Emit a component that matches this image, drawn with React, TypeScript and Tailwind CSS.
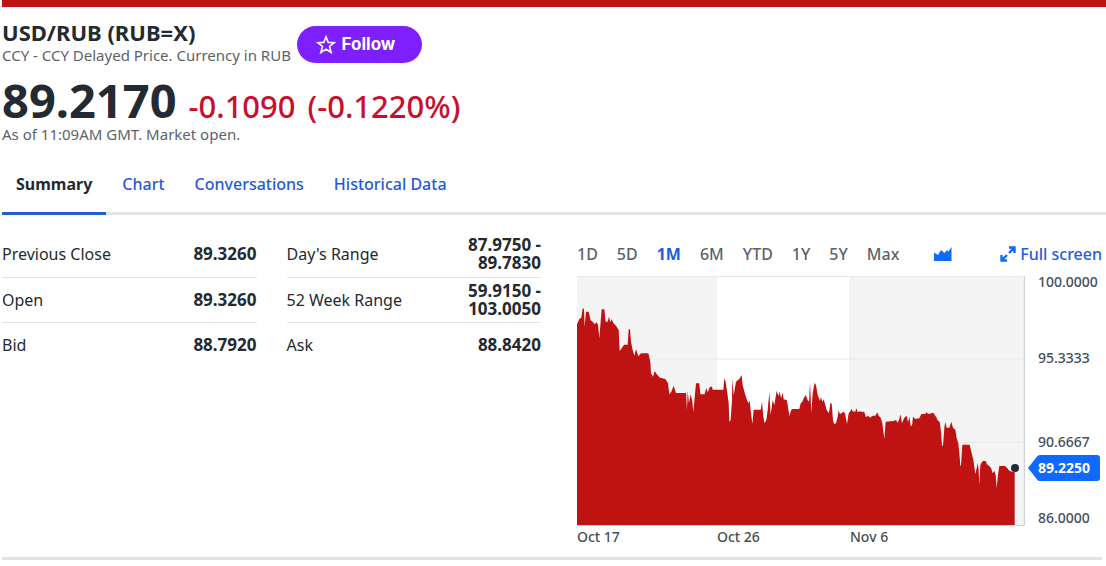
import React from "react";

const tabs = ["Summary", "Chart", "Conversations", "Historical Data"];
const ranges = ["1D", "5D", "1M", "6M", "YTD", "1Y", "5Y", "Max"];

const leftQuotes = [
  ["Previous Close", "89.3260"],
  ["Open", "89.3260"],
  ["Bid", "88.7920"],
];
const rightQuotes = [
  ["Day's Range", "87.9750 - 89.7830"],
  ["52 Week Range", "59.9150 - 103.0050"],
  ["Ask", "88.8420"],
];

// Price line, three units per pixel of the 448 x 250 plot.
const priceLine =
  "0,145 7,129 13,125 17,97 21,99 23,152 27,107 35,107 41,133 47,137 53,145 59,139 63,147 67,187 74,100 82,100 86,137 92,137 96,122 100,139 104,129 109,141 117,149 125,162 128,225 134,217 141,206 152,206 155,160 159,160 162,197 167,222 172,239 177,220 184,241 192,232 214,232 220,257 222,292 228,302 233,285 241,297 249,305 265,309 273,322 277,355 283,347 290,329 297,351 327,351 330,402 332,345 336,382 341,355 346,377 349,409 357,322 367,322 370,355 383,355 388,335 392,349 399,332 405,332 407,341 439,341 442,307 446,317 451,352 455,382 457,437 461,432 465,372 466,307 470,357 477,317 487,309 494,297 497,327 503,350 509,370 514,382 518,374 521,402 526,444 530,401 551,401 555,377 558,412 562,442 568,432 572,402 577,349 581,417 587,372 592,387 599,344 604,360 608,347 612,367 617,350 620,370 629,372 633,392 637,420 644,399 667,399 671,382 676,377 680,367 686,357 692,372 696,377 699,320 703,410 707,352 713,320 717,327 722,357 729,374 732,362 736,377 740,370 745,387 749,402 756,412 760,382 764,382 768,432 771,444 777,442 782,422 785,402 789,415 799,407 804,412 810,444 815,412 820,406 823,398 827,406 835,407 838,397 842,408 850,406 857,409 861,406 867,424 873,419 879,425 887,419 895,419 901,409 905,419 911,425 916,442 922,489 926,437 949,435 957,432 962,440 967,429 970,415 975,442 982,425 989,419 993,439 997,422 1001,449 1005,449 1008,422 1015,429 1027,427 1033,414 1045,414 1047,409 1055,414 1069,410 1077,422 1083,434 1088,437 1092,467 1095,509 1098,509 1102,455 1105,437 1109,455 1117,455 1123,437 1128,455 1135,461 1139,487 1144,502 1147,532 1150,569 1152,569 1156,506 1178,506 1183,527 1189,552 1195,594 1200,572 1202,560 1205,582 1207,627 1210,567 1217,555 1226,555 1230,565 1239,572 1243,578 1247,592 1252,584 1256,597 1259,637 1263,597 1267,570 1284,570 1291,577 1297,584 1305,587 1313,587";

function QuoteTable({ rows }: { rows: string[][] }) {
  return (
    <table className="w-full table-fixed border-collapse">
      <tbody>
        {rows.map(([label, value]) => (
          <tr key={label} className="h-[45px] border-b border-[#e0e4e9] last:border-0">
            <th scope="row" className="w-3/5 p-0 text-left text-base font-normal">
              {label}
            </th>
            <td className="p-0 text-right text-[17px] leading-[18px] font-bold">{value}</td>
          </tr>
        ))}
      </tbody>
    </table>
  );
}

function PriceChart() {
  return (
    <section className="min-w-0 flex-1" aria-label="Price chart">
      <div className="flex h-11 items-center justify-between">
        <div className="flex gap-[19px] text-base font-medium text-[#5b636a]">
          {ranges.map((r) => (
            <button key={r} type="button" className={r === "1M" ? "font-bold text-[#1a5fe0]" : ""}>
              {r}
            </button>
          ))}
          <button type="button" aria-label="Chart type" className="ml-4 text-[#0f69ff]">
            <svg viewBox="0 0 18 14" className="h-[14px] w-[18px]" fill="currentColor">
              <path d="M0 5.5 4 8 7 3 10.500 6 13 3 14.500 4.500 17.500 0V14H0Z" />
            </svg>
          </button>
        </div>
        <button type="button" className="flex items-center gap-1 text-base font-medium whitespace-nowrap text-[#1a5fe0]">
          <svg viewBox="0 0 16 16" className="h-4 w-4 text-[#0f69ff]" fill="none" stroke="currentColor" strokeWidth="2.400">
            <path d="M9 7 14 2M9 1.500H14.500V7M7 9 2 14M1.500 9V14.500H7" />
          </svg>
          Full screen
        </button>
      </div>

      <div className="flex">
        <div className="min-w-0 flex-1">
          <svg viewBox="0 0 1344 750" preserveAspectRatio="none" className="block h-[250px] w-full">
            <rect width="420" height="750" fill="#f4f4f4" />
            <rect x="816" width="528" height="750" fill="#f4f4f4" />
            <path d="M0 1.500H1344M0 249H1344M0 499H1344" stroke="#e9e9e9" strokeWidth="3" />
            <path d="M1342 0V748H0" fill="none" stroke="#c9ccd2" strokeWidth="3" />
            <polygon points={`0,747 ${priceLine} 1313,747`} fill="#bf1313" />
            <circle cx="1314" cy="576" r="12" fill="#232a31" />
          </svg>
          <div className="grid grid-cols-[140fr_133fr_175fr] text-sm leading-[22px] font-medium text-[#464e56]">
            <span>Oct 17</span>
            <span>Oct 26</span>
            <span>Nov 6</span>
          </div>
        </div>
        <div className="relative h-[250px] w-[77px] pl-[13px] text-sm leading-5 font-medium text-[#464e56]">
          <div className="-mt-1">100.0000</div>
          <div className="mt-14">95.3333</div>
          <div className="mt-16">90.6667</div>
          <div className="mt-14">86.0000</div>
          <div className="absolute top-[179px] left-[3px] flex h-[26px] items-center text-white">
            <svg viewBox="0 0 72 26" className="absolute inset-0 h-[26px] w-[72px]" fill="#0f69ff">
              <path d="M0 13 9 1.500Q10 0 12 0H69Q72 0 72 3V23Q72 26 69 26H12Q10 26 9 24.500Z" />
            </svg>
            <span className="relative pl-2.5 font-bold">89.2250</span>
          </div>
        </div>
      </div>
    </section>
  );
}

export default function App() {
  return (
    <div className="bg-white pl-0.5 font-['Noto_Sans',sans-serif] text-[#232a31]">
      <div className="h-[7px] bg-[#bf1313]" />

      <header>
        <div className="flex items-center gap-1.5 pt-[11px]">
          <div>
            <h1 className="text-[22px] leading-7 font-bold">USD/RUB (RUB=X)</h1>
            <p className="text-[15px] leading-[18px] text-[#5b636a]">CCY - CCY Delayed Price. Currency in RUB</p>
          </div>
          <button
            type="button"
            className="mt-1.5 flex h-[37px] w-[125px] items-center justify-center gap-1.5 rounded-full bg-[#7e1fff] pt-0.5 pr-2 font-['Inter',sans-serif] text-[17px] font-bold text-white"
          >
            <svg viewBox="0 0 20 20" className="h-5 w-5" fill="none" stroke="currentColor" strokeWidth="1.6">
              <path d="M10 1.800 12.200 7.400 18.200 7.700 13.500 11.500 15.100 17.400 10 14.100 4.900 17.400 6.500 11.500 1.800 7.700 7.800 7.400Z" />
            </svg>
            Follow
          </button>
        </div>
        <div className="mt-4 flex items-baseline gap-3 leading-10">
          <span className="text-[47px] font-bold">89.2170</span>
          <span className="text-[31px] font-medium text-[#c8102e]">-0.1090</span>
          <span className="text-[31px] font-medium text-[#c8102e]">(-0.1220%)</span>
        </div>
        <p className="text-[15px] leading-4 text-[#5b636a]">As of 11:09AM GMT. Market open.</p>
      </header>

      <nav className="mt-2.5 flex gap-0.5 border-b-[3px] border-[#e0e4e4] text-base font-medium text-[#1f5bd8]">
        {tabs.map((t) => (
          <a
            key={t}
            href="#"
            className={
              t === "Summary"
                ? "-mb-[3px] border-b-[3px] border-[#1d62d0] px-3.5 pt-5 pb-4 font-bold text-[#232a31]"
                : "px-3.5 pt-5 pb-4"
            }
          >
            {t}
          </a>
        ))}
      </nav>

      <main className="mr-1 flex border-b-[3px] border-[#e0e2e9] pt-[17px] pb-[9px]">
        <div className="mr-9 flex w-[49%] gap-[30px]">
          <div className="flex-1">
            <QuoteTable rows={leftQuotes} />
          </div>
          <div className="flex-1">
            <QuoteTable rows={rightQuotes} />
          </div>
        </div>
        <PriceChart />
      </main>
    </div>
  );
}
